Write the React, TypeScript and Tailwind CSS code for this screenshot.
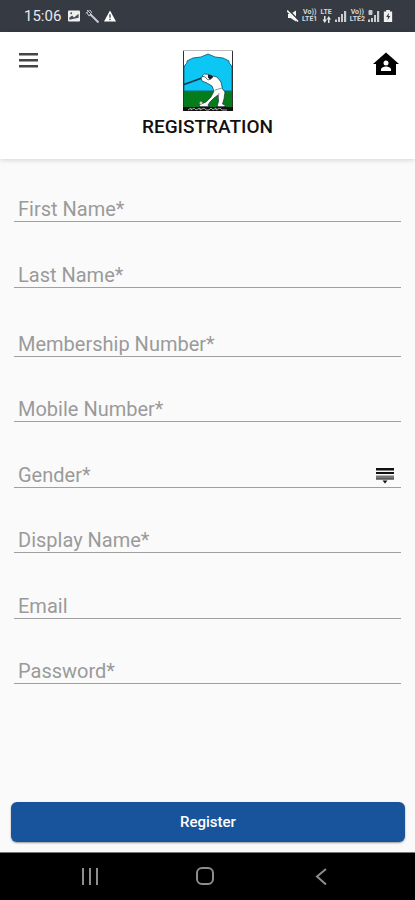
import React, { useState } from "react";

type FieldProps = {
  id: string;
  label: string;
  type?: string;
};

const labelClass =
  "pointer-events-none col-start-1 row-start-1 self-end pb-px pl-1 text-xl leading-6 text-[#9a9a9a]";
const controlClass =
  "col-start-1 row-start-1 h-7 w-full min-w-0 appearance-none border-b border-[#a0a0a0] bg-transparent px-1 text-xl leading-6 text-[#222] outline-none";

function Field({ id, label, type = "text" }: FieldProps) {
  const [value, setValue] = useState("");
  return (
    <div className="grid">
      <input
        id={id}
        type={type}
        value={value}
        onChange={(e) => setValue(e.target.value)}
        className={controlClass}
      />
      <label htmlFor={id} className={value ? `${labelClass} invisible` : labelClass}>
        {label}
      </label>
    </div>
  );
}

function GenderField() {
  const [value, setValue] = useState("");
  return (
    <div className="grid">
      <select
        id="gender"
        value={value}
        onChange={(e) => setValue(e.target.value)}
        className={controlClass}
      >
        <option value="" />
        <option value="f">Female</option>
        <option value="m">Male</option>
      </select>
      <label htmlFor="gender" className={value ? `${labelClass} invisible` : labelClass}>
        Gender*
      </label>
      <svg
        viewBox="0 0 20 17"
        className="pointer-events-none col-start-1 row-start-1 mr-1.5 mb-1 h-[17px] w-5 self-end justify-self-end"
      >
        <path d="M1 1h18v2.500H1z" fill="#111" />
        <path d="M1 5h18v2H1z" fill="#111" />
        <path d="M1 8.500h18v4H1z" fill="#777" />
        <path d="M1 11.500h18v1H1z" fill="#444" />
        <path d="M7.500 13.500h5L10 16.500z" fill="#111" />
      </svg>
    </div>
  );
}

function Signal() {
  return (
    <svg viewBox="0 0 12 12" className="h-3 w-3" fill="#c9cbce">
      <path d="M0 9.500h2V12H0zM3 7h2v5H3zM6 4h2v8H6zM9 1h2.200v11H9z" />
    </svg>
  );
}

function RoamingSignal() {
  return (
    <svg viewBox="0 0 12 12" className="h-3 w-3" fill="#c9cbce">
      <path d="M0 9.500h2V12H0zM3 8h2v4H3zM6 5h2v7H6zM9 1h2.200v11H9z" />
      <rect x="0.500" y="0" width="4" height="5" rx="1" />
    </svg>
  );
}

function Network({ top, bottom }: { top: string; bottom: string }) {
  return (
    <span className="flex flex-col items-center text-[7px] leading-[7px] font-bold text-[#d5d7da]">
      <span>{top}</span>
      <span>{bottom}</span>
    </span>
  );
}

function DataNetwork() {
  return (
    <span className="flex flex-col items-center text-[7px] leading-[7px] font-bold text-[#d5d7da]">
      <span>LTE</span>
      <svg viewBox="0 0 9 7" className="h-[7px] w-[9px]" fill="#e4e5e7">
        <path d="M2 0h1.500v3.500H5L2.700 7 .5 3.500H2zM6 7h1.500V3.500H9L6.700 0 4.700 3.500H6z" />
      </svg>
    </span>
  );
}

function StatusBar() {
  return (
    <div className="flex h-8 shrink-0 items-center justify-between bg-[#363a43] pr-[22px] pl-6 text-[#e8e9eb]">
      <div className="flex items-center gap-1">
        <span className="pr-0.5 text-[15px] leading-5">15:06</span>
        <svg viewBox="0 0 14 13" className="h-3 w-3.5">
          <rect x="0.500" y="0.500" width="13" height="12" rx="1" fill="#f0f0f0" />
          <path d="M2 8l3-2 2 2 5-4v4.500l-5 1-5 1z" fill="#4a4e56" />
          <circle cx="4" cy="3.500" r="1" fill="#4a4e56" />
        </svg>
        <svg viewBox="0 0 14 14" className="size-3.5" fill="none" stroke="#c8cacd">
          <path d="M5 5l8.500 8.500" strokeWidth="2" />
          <path d="M1 4.500L4.500 1M2 1l4.500 4.500L4 7 1.500 3M5 1l2 3" strokeWidth="1" />
        </svg>
        <svg viewBox="0 0 14 13" className="h-3 w-3.5">
          <path d="M7 .5L13.500 12.500H.5z" fill="#fff" />
          <path d="M6.300 4.500h1.400v4H6.300zM6.300 9.500h1.400V11H6.300z" fill="#363a43" />
        </svg>
      </div>
      <div className="flex items-center gap-[3px]">
        <svg viewBox="0 0 12 12" className="size-3">
          <path d="M1 4h2.500L9 .5v11L3.500 8H1z" fill="#f4f4f4" />
          <path d="M1.500 0l11 11" stroke="#363a43" strokeWidth="1.500" />
          <path d="M0 .5l11 11" stroke="#f4f4f4" strokeWidth="1.600" />
        </svg>
        <Network top="Vo))" bottom="LTE1" />
        <DataNetwork />
        <Signal />
        <Network top="Vo))" bottom="LTE2" />
        <RoamingSignal />
        <svg viewBox="0 0 10 13" className="h-3 w-2.5">
          <path d="M3 0h4v1.500h2.500V13H.5V1.500H3z" fill="#f0f0f0" />
          <path d="M6 3L3 7.500h2L4.500 11 7.500 6.500h-2z" fill="#363a43" />
        </svg>
      </div>
    </div>
  );
}

function GolfLogo() {
  return (
    <svg viewBox="0 0 50 61" className="h-[61px] w-[50px]" role="img">
      <rect width="50" height="61" fill="#fff" />
      <path
        d="M1 41V18l1-3 2-2v-2l6-3 8-1 7-3 7 3 8 1 6 3v2l2 2 1 3v23z"
        fill="#0cc6f3"
        stroke="#15617c"
        strokeWidth="0.900"
      />
      <path d="M1 41h48v16H1z" fill="#047c1c" />
      <path d="M.5 61V.5M49.500 61V.5" stroke="#333" strokeWidth="1" />
      <path d="M0 .5h50" stroke="#bbb" strokeWidth="1" />
      <path d="M0 57h50v4H0z" fill="#111" />
      <path
        d="M5 60l3-2v2l3-2 2 2 4-2v2l4-2 2 2h3l2-2 2 2 3-2v2l4-2 2 2h5"
        fill="none"
        stroke="#bbb"
        strokeWidth="0.900"
      />
      <path d="M1 34.500L19 28" stroke="#0b3550" strokeWidth="1.500" />
      <path
        d="M18 27.500l3-1.500 6 3 3-3 4 1 4 5 1.500 7 2.500 3-1 7-1.500 5 2.500 1v2h-8l1.500-6-.5-6-4 3-4 4-2 3 1 2h-9l-1-2 7-3 5-5 3-6-2-5-5-3-5-2z"
        fill="#fff"
        stroke="#16313a"
        strokeWidth="0.700"
      />
      <path d="M19 26l2-2 5 .5 3 1.500-1 3-3 1-3-3z" fill="#eef2f4" stroke="#111" strokeWidth="0.500" />
      <path d="M25 24.500l4 1 1 2-3 2-2-2z" fill="#1b2126" />
      <path d="M32 40l7-2M36 43l-1 6" stroke="#667" strokeWidth="0.700" />
      <path d="M16 57h11M34 57h8" stroke="#111" strokeWidth="1" />
      <circle cx="18" cy="53" r="1.500" fill="#e6cdb8" />
    </svg>
  );
}

function Header() {
  return (
    <header className="grid shrink-0 grid-cols-[1fr_auto_1fr] items-start bg-white px-4 pt-[18px] pb-5 shadow-[0_1px_5px_rgba(0,0,0,0.16)]">
      <button type="button" aria-label="Menu" className="justify-self-start px-0.5 py-0.5">
        <svg viewBox="0 0 20 16" className="h-4 w-5">
          <path d="M1 1h19v2.500H1zM1 7h19v2.500H1zM1 13h19v2.500H1z" fill="#454545" />
        </svg>
      </button>
      <div className="flex flex-col items-center gap-1">
        <GolfLogo />
        <h1 className="text-[19px] leading-6 font-medium text-[#111]">REGISTRATION</h1>
      </div>
      <button type="button" aria-label="Home" className="mt-0.5 justify-self-end">
        <svg viewBox="0 0 26 24" className="h-6 w-[26px]">
          <path d="M13 .5L26 12h-3v11H3V12H0z" fill="#000" />
          <circle cx="13" cy="11" r="2.500" fill="#fff" />
          <path d="M8 19v-1.500c0-2 3-3 5-3s5 1 5 3V19z" fill="#fff" />
        </svg>
      </button>
    </header>
  );
}

function NavBar() {
  return (
    <nav className="grid h-12 shrink-0 grid-cols-3 items-center border-t border-[#777] bg-black pr-9 pl-8">
      <button type="button" aria-label="Recent apps" className="justify-self-center">
        <svg viewBox="0 0 18 18" className="size-[18px]" stroke="#8d8d8d" strokeWidth="2">
          <path d="M2 0v17M9 0v17M16 0v17" />
        </svg>
      </button>
      <button type="button" aria-label="Home screen" className="justify-self-center">
        <svg viewBox="0 0 20 20" className="size-5" fill="none" stroke="#8d8d8d" strokeWidth="2">
          <rect x="2" y="1" width="16" height="16" rx="5" />
        </svg>
      </button>
      <button type="button" aria-label="Back" className="justify-self-center">
        <svg viewBox="0 0 12 18" className="h-[18px] w-3" fill="none" stroke="#8d8d8d" strokeWidth="2">
          <path d="M11 1L2 8.500l9 8" />
        </svg>
      </button>
    </nav>
  );
}

export default function App() {
  return (
    <div className="flex min-h-screen flex-col bg-[#fafafa] font-[Roboto,sans-serif]">
      <StatusBar />
      <Header />
      <form className="flex grow flex-col pt-[35px]" onSubmit={(e) => e.preventDefault()}>
        <div className="flex grow flex-col px-3.5">
          <div className="flex flex-col gap-[38px]">
            <Field id="first-name" label="First Name*" />
            <Field id="last-name" label="Last Name*" />
          </div>
          <div className="mt-[41px] flex grow flex-col justify-between gap-4">
            <Field id="membership" label="Membership Number*" />
            <Field id="mobile" label="Mobile Number*" type="tel" />
            <GenderField />
            <Field id="display-name" label="Display Name*" />
            <Field id="email" label="Email" type="email" />
            <Field id="password" label="Password*" type="password" />
          </div>
        </div>
        <div className="pt-[118px] pr-2.5 pb-2.5 pl-[11px]">
          <button
            type="submit"
            className="h-10 w-full rounded-md bg-[#17549c] text-[15px] leading-5 font-medium text-white shadow-[0_1px_2px_rgba(0,0,0,0.4)]"
          >
            Register
          </button>
        </div>
      </form>
      <NavBar />
    </div>
  );
}
